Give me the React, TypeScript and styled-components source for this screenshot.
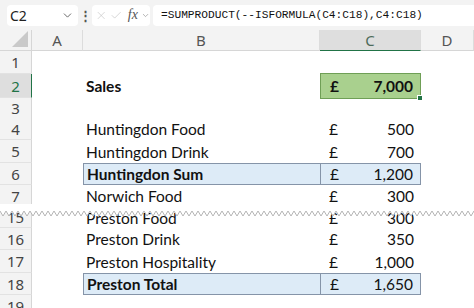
import React from 'react';
import styled, { createGlobalStyle, css } from 'styled-components';
import { X, Check, ChevronDown } from 'lucide-react';

const GlobalStyle = createGlobalStyle`
  body {
    margin: 0;
    background: #fff;
    overflow: hidden;
  }
`;

const COLS = '32px 51px 237px 101px 53px';
const CELL_FONT = `Lato, 'Liberation Sans', sans-serif`;
const UI_FONT = `'Noto Sans', 'Open Sans', sans-serif`;

const Page = styled.div`
  width: 474px;
  height: 308px;
  overflow: hidden;
  background: #fff;
`;

const FormulaBar = styled.div`
  height: 30px;
  display: flex;
  align-items: center;
  background: #f3f3f3;
  padding-left: 7px;
  box-sizing: border-box;
`;

const NameBox = styled.div`
  width: 71px;
  height: 21px;
  background: #fff;
  border-radius: 4px;
  display: flex;
  align-items: center;
  justify-content: space-between;
  padding: 0 4px 0 3px;
  box-sizing: border-box;
  font: 14px ${UI_FONT};
  color: #222;
`;

const Kebab = styled.div`
  width: 14px;
  text-align: center;
  color: #555;
  font: bold 13px ${UI_FONT};
`;

const FxBox = styled.div`
  width: 58px;
  height: 21px;
  background: #fff;
  border-radius: 4px;
  display: flex;
  align-items: center;
  gap: 3px;
  padding-left: 3px;
  box-sizing: border-box;
`;

const Fx = styled.span`
  font: italic 14px 'Liberation Serif', serif;
  color: #555;
  margin-left: 2px;
`;

const FormulaInput = styled.div`
  flex: 1;
  height: 21px;
  margin-left: 3px;
  background: #fff;
  border-radius: 4px 0 0 4px;
  display: flex;
  align-items: center;
  padding-left: 8px;
  font: 11.2px 'Liberation Mono', monospace;
  color: #111;
`;

const Grid = styled.div`
  display: flex;
  flex-direction: column;
`;

const Row = styled.div<{ $h: number }>`
  position: relative;
  display: grid;
  grid-template-columns: ${COLS};
  height: ${(p) => p.$h}px;
`;

const Corner = styled.div`
  background: #f3f3f3;
  border-right: 1px solid #d6d6d6;
  border-bottom: 1px solid #d6d6d6;
  display: flex;
  align-items: flex-end;
  justify-content: flex-end;
  padding: 0 3px 3px 0;
`;

const ColHead = styled.div<{ $active?: boolean }>`
  background: ${(p) => (p.$active ? '#dedede' : '#f3f3f3')};
  border-bottom: 1px solid ${(p) => (p.$active ? '#217346' : '#d6d6d6')};
  border-right: 1px solid #dcdcdc;
  display: flex;
  align-items: center;
  justify-content: center;
  font: 15px ${UI_FONT};
  color: ${(p) => (p.$active ? '#4d6b5a' : '#555')};
`;

const RowHead = styled.div<{ $active?: boolean }>`
  background: ${(p) => (p.$active ? '#dedede' : '#f3f3f3')};
  border-right: 1px solid ${(p) => (p.$active ? '#217346' : '#d6d6d6')};
  border-bottom: 1px solid #e2e2e2;
  display: flex;
  align-items: center;
  justify-content: center;
  font: 15px ${UI_FONT};
  color: ${(p) => (p.$active ? '#217346' : '#444')};
`;

const Cell = styled.div<{ $bold?: boolean; $box?: 'left' | 'right'; $selected?: boolean }>`
  position: relative;
  display: flex;
  align-items: center;
  font: ${(p) => (p.$bold ? 'bold' : 'normal')} 15.5px ${CELL_FONT};
  color: #111;
  padding-left: 3px;
  box-sizing: border-box;
  ${(p) =>
    p.$box &&
    css`
      background: #ddebf7;
      border: 1px solid #8594a8;
      ${p.$box === 'left' && 'border-right: none;'}
    `}
  ${(p) =>
    p.$selected &&
    css`
      background: #a9d08e;
      border: 1px solid #6f9f56;
      margin: -1px 0;
    `}
`;

const Money = styled.div`
  flex: 1;
  display: flex;
  justify-content: space-between;
  padding: 0 7px 0 6px;
`;

const Handle = styled.span`
  position: absolute;
  right: -3px;
  bottom: -3px;
  width: 4px;
  height: 4px;
  background: #217346;
  border: 1px solid #fff;
`;

const Tear = styled.svg`
  position: absolute;
  left: 0;
  top: -3px;
  width: 474px;
  height: 14px;
`;

type Line = {
  n: number;
  h: number;
  label?: string;
  value?: string;
  bold?: boolean;
  box?: boolean;
  selected?: boolean;
};

const lines: Line[] = [
  { n: 1, h: 23 },
  { n: 2, h: 24, label: 'Sales', value: '7,000', bold: true, selected: true },
  { n: 3, h: 20 },
  { n: 4, h: 22, label: 'Huntingdon Food', value: '500' },
  { n: 5, h: 23, label: 'Huntingdon Drink', value: '700' },
  { n: 6, h: 22, label: 'Huntingdon Sum', value: '1,200', bold: true, box: true },
  { n: 7, h: 22, label: 'Norwich Food', value: '300' },
  { n: 15, h: 21, label: 'Preston Food', value: '300' },
  { n: 16, h: 22, label: 'Preston Drink', value: '350' },
  { n: 17, h: 23, label: 'Preston Hospitality', value: '1,000' },
  { n: 18, h: 22, label: 'Preston Total', value: '1,650', bold: true, box: true },
  { n: 19, h: 22 },
];

// torn-paper edge over the hidden rows 8-14
function zigzag() {
  const pts: string[] = [];
  for (let x = 0, i = 0; x <= 477; x += 3, i++) {
    pts.push(`${x},${i % 2 ? 12 : 7}`);
  }
  return pts.join(' ');
}

export default function App() {
  const zz = zigzag();
  return (
    <Page>
      <GlobalStyle />
      <FormulaBar>
        <NameBox>
          C2
          <ChevronDown size={13} color="#555" strokeWidth={1.6} />
        </NameBox>
        <Kebab>⋮</Kebab>
        <FxBox>
          <X size={15} color="#c4c4c4" strokeWidth={1.3} />
          <Check size={15} color="#c4c4c4" strokeWidth={1.3} />
          <Fx>fx</Fx>
          <ChevronDown size={11} color="#888" strokeWidth={1.6} />
        </FxBox>
        <FormulaInput>=SUMPRODUCT(--ISFORMULA(C4:C18),C4:C18)</FormulaInput>
      </FormulaBar>

      <Grid>
        <Row $h={21}>
          <Corner>
            <svg width="16" height="16" viewBox="0 0 16 16">
              <polygon points="16,0 16,16 0,16" fill="#c9c9c9" />
            </svg>
          </Corner>
          <ColHead>A</ColHead>
          <ColHead>B</ColHead>
          <ColHead $active>C</ColHead>
          <ColHead>D</ColHead>
        </Row>

        {lines.map((l) => (
          <Row key={l.n} $h={l.h}>
            <RowHead $active={l.selected}>{l.n}</RowHead>
            <Cell />
            <Cell $bold={l.bold} $box={l.box ? 'left' : undefined}>
              {l.label}
            </Cell>
            <Cell $bold={l.selected} $box={l.box ? 'right' : undefined} $selected={l.selected}>
              {l.value && (
                <Money>
                  <span>£</span>
                  <span>{l.value}</span>
                </Money>
              )}
              {l.selected && <Handle />}
            </Cell>
            <Cell />
            {l.n === 15 && (
              <Tear viewBox="0 0 474 14" preserveAspectRatio="none">
                <polygon points={`0,0 ${zz} 477,0`} fill="#fff" />
                <polyline points={zz} fill="none" stroke="#b5b5b5" strokeWidth="1" />
              </Tear>
            )}
          </Row>
        ))}
      </Grid>
    </Page>
  );
}
